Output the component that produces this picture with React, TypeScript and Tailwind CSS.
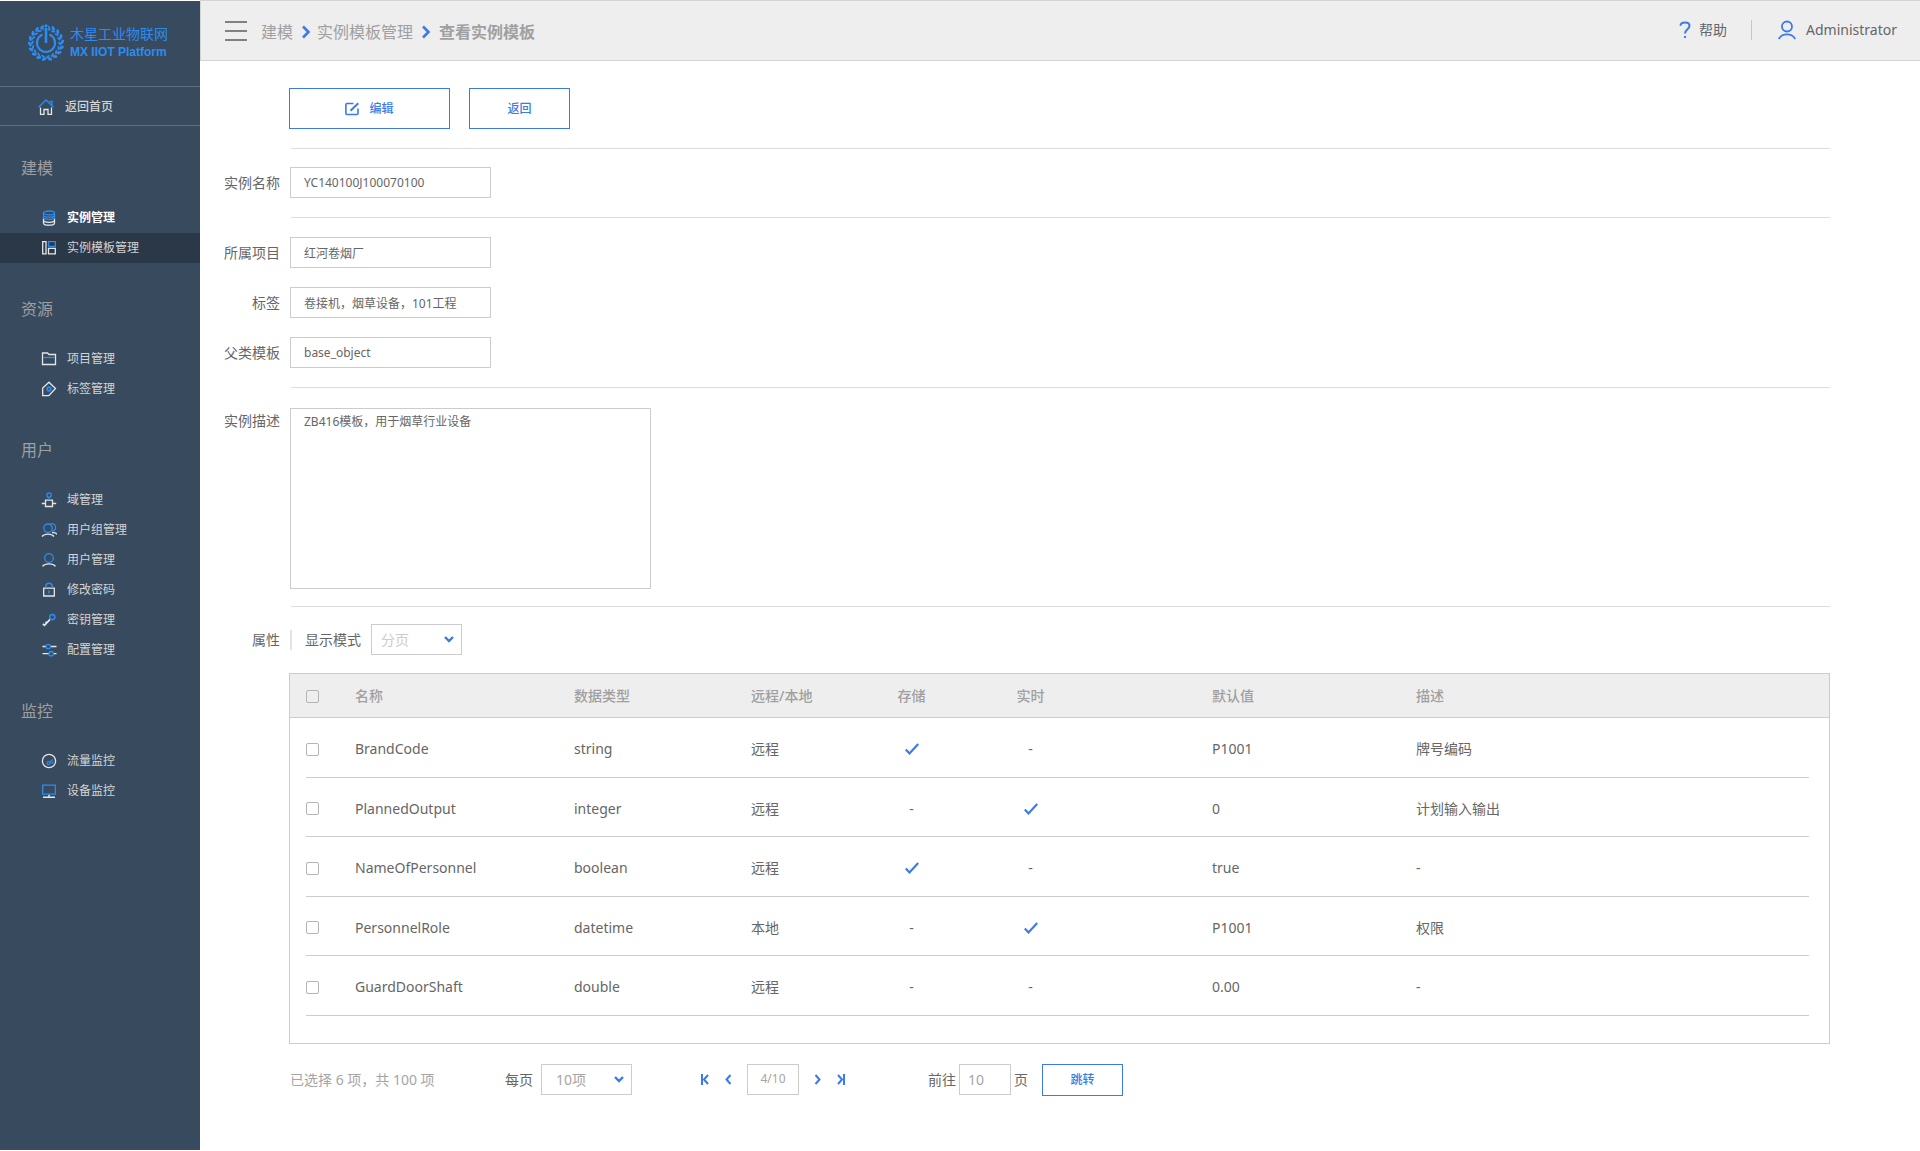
import React, { useState } from 'react';

type IconProps = { children: React.ReactNode };

const BLUE = '#2d8cf0';
const LIGHT = '#e6e6e6';

const MenuIcon = ({ children }: IconProps) => (
  <svg width="16" height="16" viewBox="0 0 16 16" fill="none" strokeWidth="1.3" className="shrink-0" aria-hidden="true">
    {children}
  </svg>
);

const icons = {
  home: (
    <MenuIcon>
      <path d="M2.5 8.5V15.3H6V10.5H10V15.3H13.5V8.5" stroke={LIGHT} />
      <path d="M0.5 8.2L8 1L15.5 8.2M11.5 2.5H14V6" stroke={BLUE} />
    </MenuIcon>
  ),
  database: (
    <MenuIcon>
      <path d="M2.5 8.5V13C2.5 14.2 5 15.2 8 15.2S13.5 14.2 13.5 13V8.5M2.5 10.3C2.5 11.5 5 12.3 8 12.3S13.5 11.5 13.5 10.3" stroke={LIGHT} />
      <ellipse cx="8" cy="2.9" rx="5.5" ry="1.9" stroke={BLUE} />
      <path d="M2.5 3V7.3C2.5 8.5 5 9.4 8 9.4S13.5 8.5 13.5 7.3V3M2.5 5.2C2.5 6.3 5 7.1 8 7.1S13.5 6.3 13.5 5.2" stroke={BLUE} />
    </MenuIcon>
  ),
  template: (
    <MenuIcon>
      <path d="M1.7 1.7H5V13.8H1.7ZM7.5 8.3H14.3V13.8H7.5Z" stroke={LIGHT} />
      <path d="M7.5 6.5V1.7H14.3V6.5H7.5" stroke={BLUE} />
    </MenuIcon>
  ),
  folder: (
    <MenuIcon>
      <path d="M1.5 13.5V2H6.5L8 3.5H14.5V13.5Z" stroke={LIGHT} />
      <path d="M2.2 6.5H13.8" stroke={BLUE} />
    </MenuIcon>
  ),
  tag: (
    <MenuIcon>
      <path d="M8 1.2L14.5 7.5L7.8 14.6H1.7V7Z" stroke={LIGHT} />
      <circle cx="8" cy="8" r="1.8" stroke={BLUE} strokeWidth="1.8" />
    </MenuIcon>
  ),
  domain: (
    <MenuIcon>
      <path d="M4.5 8.2H11.5V14.5H4.5ZM0.8 11.5H4.5M11.5 11.5H15.2" stroke={LIGHT} />
      <circle cx="8" cy="3" r="2.2" stroke={BLUE} />
      <path d="M8 5.2V8" stroke={BLUE} />
    </MenuIcon>
  ),
  group: (
    <MenuIcon>
      <path d="M1 14.5C3.500 11.3 10.5 11.3 13 14.500M11 10.8C13 10.5 15 11 16 12.3" stroke={LIGHT} />
      <circle cx="7" cy="6.2" r="4.2" stroke={BLUE} />
      <path d="M9 2.5C11 0.7 14.6 2 14.6 5.5C14.6 8 13 9.3 11 9.2" stroke={BLUE} />
    </MenuIcon>
  ),
  user: (
    <MenuIcon>
      <path d="M1.5 14.3C4 11 12 11 14.5 14.3" stroke={LIGHT} />
      <circle cx="8" cy="6" r="4.3" stroke={BLUE} />
    </MenuIcon>
  ),
  lock: (
    <MenuIcon>
      <path d="M2.7 6.2H13.3V14H2.7Z" stroke={LIGHT} />
      <path d="M4.8 5.5V4.3C4.8 0.300 11.2 0.3 11.2 4.3V5.5M8 8.5V11.5" stroke={BLUE} strokeWidth="1.5" />
    </MenuIcon>
  ),
  key: (
    <MenuIcon>
      <path d="M9.3 7.2L3.5 13.3L1.8 11.8M6.2 11.5L4.5 9.8" stroke={LIGHT} strokeWidth="1.7" />
      <circle cx="11.3" cy="5" r="2.6" stroke={BLUE} strokeWidth="1.5" />
    </MenuIcon>
  ),
  config: (
    <MenuIcon>
      <path d="M1.5 4.5H5M9.5 4.5H15.500M1.5 11.7H8M12.5 11.7H15.5" stroke={LIGHT} />
      <circle cx="7.2" cy="4.5" r="2.2" stroke={BLUE} />
      <circle cx="10.2" cy="11.7" r="2.2" stroke={BLUE} />
    </MenuIcon>
  ),
  traffic: (
    <MenuIcon>
      <circle cx="8" cy="8" r="6.6" stroke={LIGHT} />
      <circle cx="7.6" cy="10.2" r="1.5" stroke={BLUE} />
      <path d="M8.7 9.2L11.8 6.5M10.5 10.5L12.5 8.8" stroke={BLUE} />
    </MenuIcon>
  ),
  device: (
    <MenuIcon>
      <path d="M2 14.2H14M8 11.5V14" stroke={LIGHT} strokeWidth="1.5" />
      <path d="M1.7 2.2H14.3V11.2H1.7Z" stroke={BLUE} />
    </MenuIcon>
  ),
};

const menu: { title: string; items: { label: string; icon: keyof typeof icons; bright?: boolean; active?: boolean }[] }[] = [
  {
    title: '建模',
    items: [
      { label: '实例管理', icon: 'database', bright: true },
      { label: '实例模板管理', icon: 'template', active: true },
    ],
  },
  {
    title: '资源',
    items: [
      { label: '项目管理', icon: 'folder' },
      { label: '标签管理', icon: 'tag' },
    ],
  },
  {
    title: '用户',
    items: [
      { label: '域管理', icon: 'domain' },
      { label: '用户组管理', icon: 'group' },
      { label: '用户管理', icon: 'user' },
      { label: '修改密码', icon: 'lock' },
      { label: '密钥管理', icon: 'key' },
      { label: '配置管理', icon: 'config' },
    ],
  },
  {
    title: '监控',
    items: [
      { label: '流量监控', icon: 'traffic' },
      { label: '设备监控', icon: 'device' },
    ],
  },
];

const rows = [
  { name: 'BrandCode', type: 'string', place: '远程', stored: true, live: false, value: 'P1001', desc: '牌号编码' },
  { name: 'PlannedOutput', type: 'integer', place: '远程', stored: false, live: true, value: '0', desc: '计划输入输出' },
  { name: 'NameOfPersonnel', type: 'boolean', place: '远程', stored: true, live: false, value: 'true', desc: '-' },
  { name: 'PersonnelRole', type: 'datetime', place: '本地', stored: false, live: true, value: 'P1001', desc: '权限' },
  { name: 'GuardDoorShaft', type: 'double', place: '远程', stored: false, live: false, value: '0.00', desc: '-' },
];

// leaves of the wreath, one pair every 20 degrees
const leafAngles = Array.from({ length: 18 }, (_, i) => i * 20 + 10);

const Logo = () => (
  <svg width="38" height="38" viewBox="0 0 38 38" fill="none" stroke={BLUE} className="shrink-0" aria-hidden="true">
    {leafAngles.map((angle) => (
      <g key={angle} transform={`rotate(${angle} 19 19)`} fill={BLUE} stroke="none">
        <ellipse cx="18" cy="2.8" rx="2.6" ry="1.5" transform={`rotate(${angle < 180 ? 35 : -35} 18 2.8)`} />
        <ellipse cx="19.5" cy="5.4" rx="2.2" ry="1" transform={`rotate(${angle < 180 ? -25 : 25} 19.5 5.4)`} />
      </g>
    ))}
    <path d="M15.5 10.6A9 9 0 1 0 22.5 10.6" strokeWidth="2.2" />
    <path d="M19 1V8" stroke="#384a5e" strokeWidth="4.5" />
    <path d="M19 4V19" strokeWidth="2.6" />
    <circle cx="19" cy="1.8" r="1.6" fill={BLUE} stroke="none" />
  </svg>
);

const Chevron = ({ className }: { className: string }) => (
  <svg width="10" height="14" viewBox="0 0 10 14" fill="none" stroke="#3b7ae8" strokeWidth="2.6" className={className} aria-hidden="true">
    <path d="M2 1.5L7.5 7L2 12.5" />
  </svg>
);

const Tick = () => (
  <svg width="14" height="14" viewBox="0 0 14 14" fill="none" stroke="#3b7ae8" strokeWidth="2.2" className="inline-block" role="img" aria-label="是">
    <path d="M0.8 6.5L4.5 10.5L13.2 1" />
  </svg>
);

const Flag = ({ on }: { on: boolean }) => (on ? <Tick /> : <>-</>);

const Checkbox = ({ label }: { label: string }) => (
  <input
    type="checkbox"
    aria-label={label}
    className="block w-[13px] h-[13px] appearance-none rounded-xs border border-[#b4b4b4] checked:bg-[#3b7ae8]"
  />
);

type SelectProps = { id: string; option: string; className: string };

const Select = ({ id, option, className }: SelectProps) => (
  <div className="grid items-center">
    <select id={id} className={`col-start-1 row-start-1 w-[91px] h-[31px] appearance-none border border-[#ccc] bg-white text-sm ${className}`}>
      <option>{option}</option>
    </select>
    <svg
      width="10" height="7" viewBox="0 0 10 7" fill="none" stroke="#3b7ae8" strokeWidth="2.4"
      className="col-start-1 row-start-1 justify-self-end mr-2 pointer-events-none" aria-hidden="true"
    >
      <path d="M1 1L5 5L9 1" />
    </svg>
  </div>
);

type FieldProps = { id: string; label: string; value: string };

const Field = ({ id, label, value }: FieldProps) => (
  <div className="flex items-center gap-2.5">
    <label htmlFor={id} className="w-20 text-right">{label}</label>
    <input id={id} defaultValue={value} className="w-[201px] h-[31px] border border-[#ccc] px-[13px] text-xs" />
  </div>
);

const Divider = () => <hr className="ml-[91px] border-[#dcdcdc]" />;

const Sidebar = () => (
  <aside className="w-[200px] shrink-0 my-px bg-[#384a5e] text-xs text-[#d4d4d4]">
    <div className="flex items-center gap-[5px] h-[85px] pl-[27px] pb-0.5 text-[#2d8cf0]">
      <Logo />
      <div className="whitespace-nowrap">
        <div className="text-sm leading-[18px]">木星工业物联网</div>
        <div className="font-['Liberation_Sans',sans-serif] font-bold leading-[18px]">MX IIOT Platform</div>
      </div>
    </div>
    <a href="#home" className="flex items-center gap-[11px] h-10 pt-px pl-[38px] border-y border-[#5f6f7e] font-medium">
      {icons.home}
      返回首页
    </a>
    <nav className="flex flex-col gap-[34px] pt-[30px]">
      {menu.map((group) => (
        <section key={group.title}>
          <h2 className="pl-[21px] mb-[23px] text-base leading-6 text-[#9f9f9f]">{group.title}</h2>
          <ul>
            {group.items.map((item) => (
              <li key={item.label}>
                <a
                  href="#menu"
                  className={`flex items-center gap-2.5 h-[30px] pl-[41px] ${item.active ? 'bg-[#2a3847]' : ''} ${item.bright ? 'font-bold text-white' : ''}`}
                >
                  {icons[item.icon]}
                  {item.label}
                </a>
              </li>
            ))}
          </ul>
        </section>
      ))}
    </nav>
  </aside>
);

const Header = () => (
  <header className="flex items-center justify-between h-[61px] pl-6 pr-[23px] border border-r-0 border-[#d4d4d4] bg-[#eee]">
    <div className="flex items-center">
      <button type="button" aria-label="菜单" className="flex flex-col gap-[7px] w-[22px] mr-3.5">
        <span className="h-0.5 w-full bg-[#808080]" />
        <span className="h-0.5 w-full bg-[#808080]" />
        <span className="h-0.5 w-full bg-[#808080]" />
      </button>
      <nav className="flex items-center pt-0.5 text-base text-[#a0a0a0]">
        <a href="#model">建模</a>
        <Chevron className="ml-2 mr-1.5" />
        <a href="#templates">实例模板管理</a>
        <Chevron className="ml-2 mr-2" />
        <span className="font-bold">查看实例模板</span>
      </nav>
    </div>
    <div className="flex items-center pb-0.5">
      <a href="#help" className="flex items-center gap-2">
        <svg width="12" height="18" viewBox="0 0 12 18" fill="none" stroke="#3b7ae8" strokeWidth="2" aria-hidden="true">
          <path d="M1.500 4.8C1.5 0.3 10.5 0.3 10.5 4.8C10.5 8 6 8.5 6 12.5M6 15V17" />
        </svg>
        帮助
      </a>
      <span className="w-px h-5 ml-6 mr-[26px] bg-[#c8c8c8]" />
      <a href="#account" className="flex items-center gap-2.5">
        <svg width="18" height="20" viewBox="0 0 18 20" fill="none" stroke="#3b7ae8" strokeWidth="1.8" aria-hidden="true">
          <circle cx="9" cy="6.5" r="5" />
          <path d="M0.8 19C4 12.8 14 12.8 17.2 19" />
        </svg>
        Administrator
      </a>
    </div>
  </header>
);

const AttributeTable = () => (
  <div className="ml-[89px] pb-[27px] border border-[#ccc]">
    <table className="w-full table-fixed text-left">
      <colgroup>
        <col className="w-4" />
        <col className="w-[49px]" />
        <col className="w-[219px]" />
        <col className="w-[177px]" />
        <col className="w-[101px]" />
        <col className="w-[119px]" />
        <col className="w-[119px]" />
        <col className="w-[326px]" />
        <col />
        <col className="w-5" />
      </colgroup>
      <thead>
        <tr className="h-[43px] bg-[#eee] border-b border-[#ccc] text-[#a0a0a0] *:pt-0.5 *:font-medium">
          <td />
          <th><Checkbox label="全选" /></th>
          <th>名称</th>
          <th>数据类型</th>
          <th className="whitespace-nowrap">远程/本地</th>
          <th className="text-center">存储</th>
          <th className="text-center">实时</th>
          <th className="pl-[122px]">默认值</th>
          <th>描述</th>
          <td />
        </tr>
      </thead>
      <tbody>
        {rows.map((row) => (
          <tr key={row.name} className="h-[60px] even:h-[59px] *:pt-1 *:not-first:not-last:border-b *:border-[#ccc]">
            <td />
            <td><Checkbox label={row.name} /></td>
            <td>{row.name}</td>
            <td>{row.type}</td>
            <td>{row.place}</td>
            <td className="text-center"><Flag on={row.stored} /></td>
            <td className="text-center"><Flag on={row.live} /></td>
            <td className="pl-[122px]">{row.value}</td>
            <td>{row.desc}</td>
            <td />
          </tr>
        ))}
      </tbody>
    </table>
  </div>
);

const pagerPaths = {
  首页: 'M1 1V12M7 2L3 6.5L7 11',
  上一页: 'M6.5 2L2.5 6.5L6.5 11',
  下一页: 'M1.5 2L5.5 6.5L1.5 11',
  末页: 'M1 2L5 6.5L1 11M7 1V12',
};

const PagerButton = ({ label }: { label: keyof typeof pagerPaths }) => (
  <button type="button" aria-label={label}>
    <svg width="8" height="13" viewBox="0 0 8 13" fill="none" stroke="#3b7ae8" strokeWidth="2" aria-hidden="true">
      <path d={pagerPaths[label]} />
    </svg>
  </button>
);

const Pagination = () => {
  const [target, setTarget] = useState('10');

  return (
    <div className="flex items-center ml-[90px] mt-5 h-8">
      <span className="w-[215px] text-[#a5a5a5]">已选择 6 项，共 100 项</span>
      <label htmlFor="page-size" className="mr-2">每页</label>
      <Select id="page-size" option="10项" className="pl-3.5 text-[#a5a5a5]" />
      <div className="flex items-center gap-[15px] ml-[69px]">
        <PagerButton label="首页" />
        <PagerButton label="上一页" />
        <span className="w-[52px] h-[31px] border border-[#ccc] text-center text-xs leading-7 text-[#a5a5a5]">4/10</span>
        <PagerButton label="下一页" />
        <PagerButton label="末页" />
      </div>
      <label htmlFor="page-target" className="ml-[83px]">前往</label>
      <input
        id="page-target"
        value={target}
        onChange={(e) => setTarget(e.target.value)}
        className="w-[52px] h-[31px] mx-[3px] border border-[#ccc] px-2 text-[#a5a5a5]"
      />
      <span>页</span>
      <button type="button" className="w-[81px] h-8 ml-[14px] border border-[#3b7ae8] text-xs font-medium text-[#3b7ae8]">跳转</button>
    </div>
  );
};

const App: React.FC = () => {
  return (
    <div className="flex min-h-screen bg-white font-['Noto_Sans','Noto_Sans_CJK_SC',sans-serif] text-sm text-[#666]">
      <Sidebar />
      <div className="flex-1 min-w-0">
        <Header />
        <main className="pr-[90px] pt-[27px] pb-10">
          <div className="flex gap-[19px] ml-[89px] mb-[19px] text-xs font-medium text-[#3b7ae8]">
            <button type="button" className="flex items-center justify-center gap-2.5 w-[161px] h-[41px] border border-[#3b7ae8]">
              <svg width="14" height="14" viewBox="0 0 14 14" fill="none" stroke="#3b7ae8" strokeWidth="1.6" aria-hidden="true">
                <path d="M8.5 1.5H2C1.4 1.5 0.9 2 0.9 2.5V11.5C0.9 12 1.4 12.5 2 12.5H12C12.6 12.5 13 12 13 11.5V6.5" />
                <path d="M5.5 8.7L13.3 1.2" strokeWidth="2" />
              </svg>
              编辑
            </button>
            <button type="button" className="w-[101px] h-[41px] border border-[#3b7ae8]">返回</button>
          </div>
          <Divider />
          <div className="pt-[18px] pb-[19px]">
            <Field id="instance-name" label="实例名称" value="YC140100J100070100" />
          </div>
          <Divider />
          <div className="flex flex-col gap-[19px] py-[19px]">
            <Field id="project" label="所属项目" value="红河卷烟厂" />
            <Field id="tags" label="标签" value="卷接机，烟草设备，101工程" />
            <Field id="parent" label="父类模板" value="base_object" />
          </div>
          <Divider />
          <div className="flex gap-2.5 pt-5 pb-[17px]">
            <label htmlFor="description" className="w-20 pt-[3px] text-right">实例描述</label>
            <textarea
              id="description"
              defaultValue="ZB416模板，用于烟草行业设备"
              className="w-[361px] h-[181px] resize-none border border-[#ccc] px-[13px] py-[5px] text-xs"
            />
          </div>
          <Divider />
          <div className="flex items-center pt-[17px] pb-[18px]">
            <h3 className="w-20 text-right">属性</h3>
            <span className="w-0.5 h-5 ml-2.5 mr-[13px] bg-[#e3e3e3]" />
            <label htmlFor="display-mode" className="mr-2.5">显示模式</label>
            <Select id="display-mode" option="分页" className="pl-[9px] text-[#ccc]" />
          </div>
          <AttributeTable />
          <Pagination />
        </main>
      </div>
    </div>
  );
};

export default App;
